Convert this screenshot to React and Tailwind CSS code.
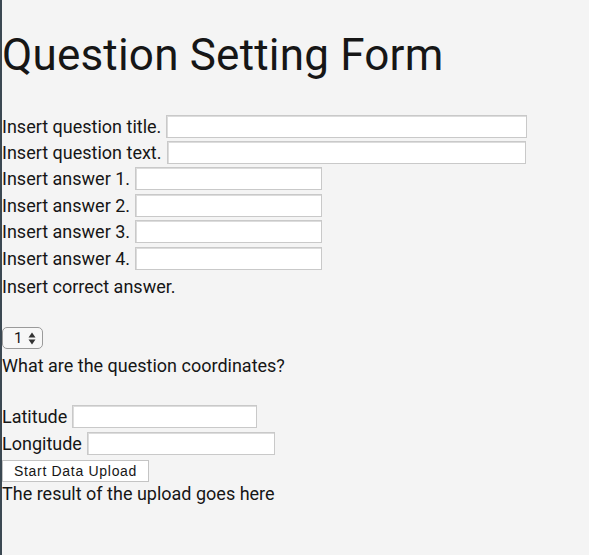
export default function App() {
  const inputCls = "h-[23px] bg-white border border-[#c9c9c9] shadow-[inset_1px_1px_0_#dcdcdc] ml-[5px] shrink-0";
  const rowCls = "flex items-start";
  const labelCls = "leading-[23px] whitespace-nowrap";
  return (
    <div className="min-h-[555px] bg-[#f4f4f4] border-l-2 border-[#3b4852] text-[#161616] text-[18px] font-['Roboto',sans-serif]">
      <h1 className="text-[44px] leading-[48px] pt-[31px] pb-[36px] font-normal tracking-[0.2px]">Question Setting Form</h1>
      <div className={rowCls + " h-[26px]"}>
        <span className={labelCls}>Insert question title.</span>
        <div className={inputCls + " w-[361px]"} />
      </div>
      <div className={rowCls + " h-[26px]"}>
        <span className={labelCls}>Insert question text.</span>
        <div className={inputCls + " w-[359px]"} />
      </div>
      <div className={rowCls + " h-[27px]"}>
        <span className={labelCls}>Insert answer 1.</span>
        <div className={inputCls + " w-[187px]"} />
      </div>
      <div className={rowCls + " h-[26px]"}>
        <span className={labelCls}>Insert answer 2.</span>
        <div className={inputCls + " w-[187px]"} />
      </div>
      <div className={rowCls + " h-[27px]"}>
        <span className={labelCls}>Insert answer 3.</span>
        <div className={inputCls + " w-[187px]"} />
      </div>
      <div className={rowCls + " h-[27px]"}>
        <span className={labelCls}>Insert answer 4.</span>
        <div className={inputCls + " w-[187px]"} />
      </div>
      <div className="leading-[26px]">Insert correct answer.</div>
      <div className="h-[27px]" />
      <div className="w-[41px] h-[22px] border border-[#9a9a9a] rounded-[5px] bg-[#f7f7f7] flex items-center pl-[11px] gap-[6px] text-[15px]">
        <span className="leading-none">1</span>
        <svg width="8" height="13" viewBox="0 0 8 13">
          <path d="M4 0.5 L7.5 5.5 L0.5 5.5 Z" fill="#333" />
          <path d="M4 12.5 L7.5 7.5 L0.5 7.5 Z" fill="#333" />
        </svg>
      </div>
      <div className="h-[4px]" />
      <div className="leading-[26px]">What are the question coordinates?</div>
      <div className="h-[26px]" />
      <div className={rowCls + " h-[27px]"}>
        <span className={labelCls}>Latitude</span>
        <div className={inputCls + " w-[185px]"} />
      </div>
      <div className={rowCls + " h-[28px]"}>
        <span className={labelCls}>Longitude</span>
        <div className={inputCls + " w-[188px]"} />
      </div>
      <div className="w-[147px] h-[22px] bg-white border border-[#c4c4c4] text-[14px] flex items-center justify-center tracking-[0.7px] font-['Liberation_Sans',sans-serif]">
        Start Data Upload
      </div>
      <div className="leading-[24px]">The result of the upload goes here</div>
    </div>
  );
}
